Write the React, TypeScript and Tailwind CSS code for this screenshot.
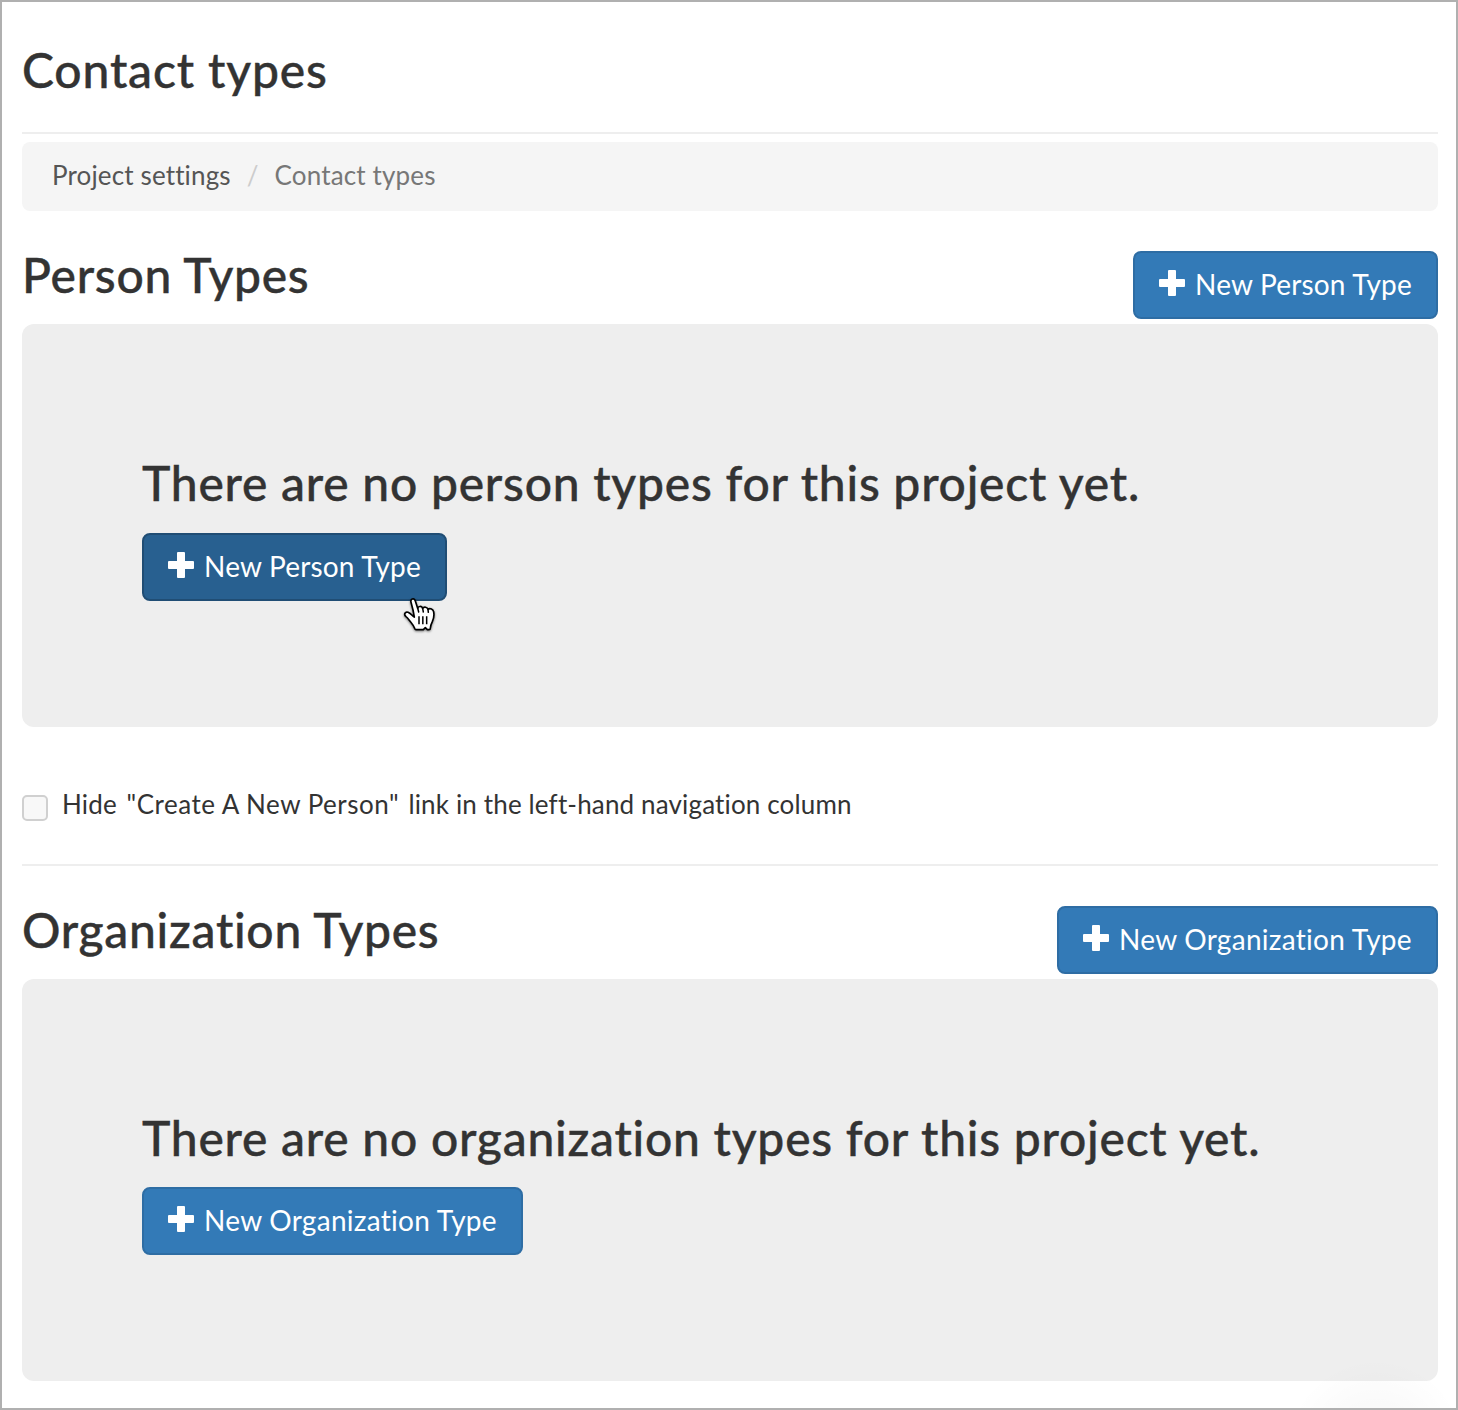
import React from 'react';

function PlusIcon() {
  return (
    <svg viewBox="0 0 26 26" className="size-[26px] shrink-0" fill="currentColor" aria-hidden="true">
      <rect x="9" y="0" width="8" height="26" rx="1" />
      <rect x="0" y="9" width="26" height="8" rx="1" />
    </svg>
  );
}

function PointerCursor() {
  return (
    <svg
      viewBox="0 0 180 150"
      className="pointer-events-none absolute top-[57px] left-[248px] h-[50px] w-[60px] overflow-visible drop-shadow-[0_1px_1px_rgba(0,0,0,0.5)]"
      aria-hidden="true"
    >
      <path
        d="M63 37C60 26 73 23 76 33L83 55C84 48 95 47 98 55C102 49 112 51 114 58C120 53 130 57 131 66C133 76 131 86 127 95C123 103 121 108 121 115Q121 119 117 119L112 119L106 113L100 119L78 119Q75 119 74 115C71 108 67 102 62 96C57 90 54 84 48 80C40 73 46 64 54 67C61 70 66 76 73 81C71 67 67 51 63 37Z"
        fill="#fff"
        stroke="#000"
        strokeWidth="5"
        strokeLinejoin="round"
      />
      <path d="M83 54L86 66M98 55L100 66M114 58L115 67" stroke="#000" strokeWidth="4.5" strokeLinecap="round" />
      <path d="M87 79V103M98.500 79V103M110 79V103" stroke="#000" strokeWidth="4.5" />
    </svg>
  );
}

type ButtonInfo = { label: string; size: string };

const newPersonType: ButtonInfo = { label: 'New Person Type', size: 'w-[305px] tracking-[0.19px]' };
const newOrganizationType: ButtonInfo = { label: 'New Organization Type', size: 'w-[381px] tracking-[0.28px]' };

function NewButton({ button, active = false }: { button: ButtonInfo; active?: boolean }) {
  return (
    <button
      type="button"
      className={
        'flex h-[68px] shrink-0 items-center gap-[10px] rounded-lg border-2 pb-1 pl-6 text-[28px] leading-10 whitespace-nowrap text-white ' +
        button.size +
        (active ? ' border-[#204d74] bg-[#286090]' : ' border-[#2e6da4] bg-[#337ab7]')
      }
    >
      <PlusIcon />
      <span className="pt-0.5">{button.label}</span>
    </button>
  );
}

function TypeSection({
  title,
  message,
  button,
  active = false,
}: {
  title: string;
  message: string;
  button: ButtonInfo;
  active?: boolean;
}) {
  return (
    <section className="mt-10">
      <div className="flex h-[68px] items-start justify-between">
        <h2 className="text-[48px] leading-[47px] font-medium tracking-[0.71px] [-webkit-text-stroke:0.4px]">{title}</h2>
        <NewButton button={button} />
      </div>
      <div className="mt-[5px] h-[402.5px] rounded-xl bg-[#eeeeee] pt-[135px] pl-[120px]">
        <h2 className="text-[48px] leading-[48px] font-medium tracking-[0.76px] whitespace-nowrap [-webkit-text-stroke:0.4px]">
          {message}
        </h2>
        <div className="relative mt-[25.5px] w-fit">
          <NewButton button={button} active={active} />
          {active && <PointerCursor />}
        </div>
      </div>
    </section>
  );
}

export default function App() {
  return (
    <main className="relative h-[1410px] w-[1458px] overflow-hidden border-2 border-[#b0b0b0] bg-white pr-[18px] pl-5 font-['Lato',sans-serif] text-[#333333]">
      <header className="border-b-2 border-[#eeeeee] pt-[44px] pb-[38px]">
        <h1 className="text-[48px] leading-[48px] font-medium tracking-[0.85px] [-webkit-text-stroke:0.4px]">Contact types</h1>
      </header>

      <nav className="mt-2 flex h-[69px] items-start rounded-lg bg-[#f5f5f5] pt-[15px] pl-[30px] text-[26px] leading-9 tracking-[0.14px]">
        <a className="text-[#555555]">Project settings</a>
        <span className="mx-4 text-[#cccccc]">/</span>
        <span className="text-[#777777]">Contact types</span>
      </nav>

      <TypeSection
        title="Person Types"
        message="There are no person types for this project yet."
        button={newPersonType}
        active
      />

      <label className="mt-[68.5px] flex h-[68.9px] items-start text-[26px] leading-9">
        <span className="size-[26px] shrink-0 rounded-[5px] border-2 border-[#d0d0d0] bg-[#f8f8f8]" />
        <span className="-mt-[9px] ml-[14px] tracking-[0.15px]">
          Hide <span className="mr-[2.5px] ml-[3px] tracking-[0.5px]">"Create A New Person"</span> link in the left-hand
          navigation column
        </span>
      </label>
      <hr className="border-t-2 border-[#eeeeee]" />

      <TypeSection
        title="Organization Types"
        message="There are no organization types for this project yet."
        button={newOrganizationType}
      />

      <div className="pointer-events-none absolute right-0 bottom-0 h-[60px] w-[220px] bg-[radial-gradient(circle_at_140px_100px,rgba(0,0,0,0.04),transparent_90px)]" />
    </main>
  );
}
